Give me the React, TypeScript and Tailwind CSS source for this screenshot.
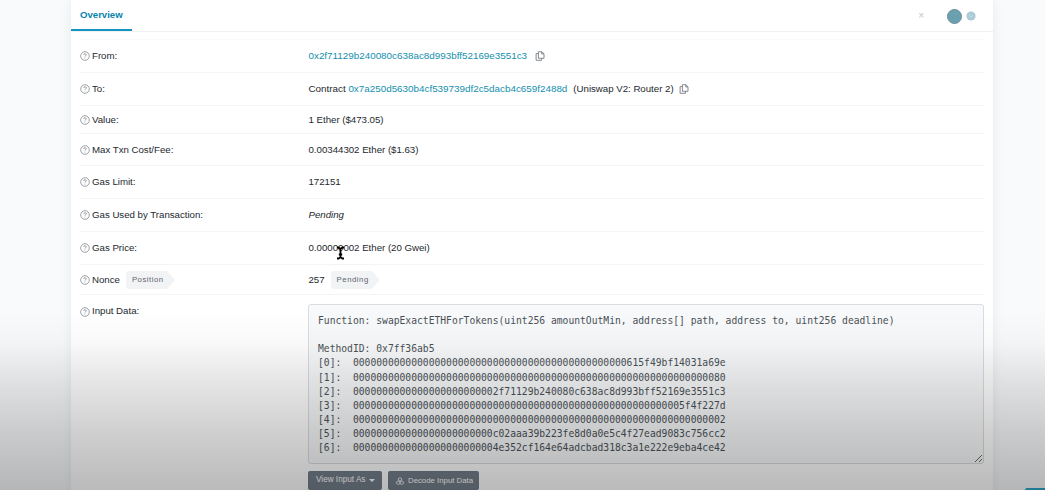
import type { ReactNode } from "react";

interface RowProps {
    label: string;
    height: string;
    tag?: string;
    children: ReactNode;
}

const inputWords = [
    "615f49bf14031a69e",
    "80",
    "2f71129b240080c638ac8d993bff52169e3551c3",
    "5f4f227d",
    "2",
    "c02aaa39b223fe8d0a0e5c4f27ead9083c756cc2",
    "4e352cf164e64adcbad318c3a1e222e9eba4ce42",
];

const inputData = [
    "Function: swapExactETHForTokens(uint256 amountOutMin, address[] path, address to, uint256 deadline)",
    "",
    "MethodID: 0x7ff36ab5",
    ...inputWords.map((word, i) => `[${i}]:  ${word.padStart(64, "0")}`),
].join("\n");

function HelpIcon() {
    return (
        <svg className="mr-[2px] size-[10px] shrink-0" viewBox="0 0 10 10" fill="none" stroke="#858a90" strokeWidth="0.8">
            <circle cx="5" cy="5" r="4.3" />
            <path d="M3.7 4c0-.8.6-1.3 1.3-1.3s1.3.4 1.3 1.1c0 .9-1.3 1-1.3 1.9M5 6.7v.8" />
        </svg>
    );
}

function CopyIcon() {
    return (
        <svg className="size-[10px] shrink-0" viewBox="0 0 10 10" fill="none" stroke="#777d83" strokeWidth="0.9" strokeLinejoin="round">
            <path d="M3.4.7h3.4L9 2.8v4.5H3.4zM6.7.9v2H9" />
            <path d="M3.2 2.6H1.1v6.7h5.4V7.5" />
        </svg>
    );
}

function Tag({ children }: { children: ReactNode }) {
    return (
        <span className="flex h-[18px] w-[49px] items-center rounded-[3px] bg-[#f1f3f5] pl-[6px] text-[7.8px] tracking-[0.5px] text-[#5d6771] [clip-path:polygon(0_0,84%_0,100%_50%,84%_100%,0_100%)]">
            {children}
        </span>
    );
}

function Row({ label, height, tag, children }: RowProps) {
    return (
        <div className={`flex items-center border-b border-[#f3f4f5] pt-px ${height}`}>
            <div className="flex w-[228.5px] shrink-0 items-center">
                <HelpIcon />
                <span>{label}</span>
                {tag && <span className="ml-[6px]"><Tag>{tag}</Tag></span>}
            </div>
            <div className="flex items-center whitespace-pre">{children}</div>
        </div>
    );
}

export default function App() {
    return (
        <div className="relative h-[490px] w-[1045px] overflow-hidden bg-[#f8fafb] font-['Liberation_Sans',Arial,sans-serif] text-[9.7px] tracking-[-0.02px] text-[#24292e]">
            <div className="mx-auto ml-[71px] h-full w-[922px] bg-white shadow-[0_0_10px_rgba(90,110,120,0.1)]">
                {/* Tabs */}
                <div className="flex h-[32px] items-start justify-between border-b border-[#eef0f2]">
                    <div className="h-[31px] w-[61px] border-b-2 border-[#1695c5] pl-[9px] pt-[9px] text-[9.6px] leading-[12px] font-bold tracking-normal text-[#0784ad]">
                        Overview
                    </div>
                    <div className="flex h-[32px] items-center pr-[17px]">
                        <span className="mr-[23px] text-[10px] leading-none text-[#c2c5c8]">×</span>
                        <span className="size-[15px] rounded-full border border-[#718d9b] bg-[#6ba0b1]" />
                        <svg className="ml-[4px] size-[10px]" viewBox="0 0 10 10">
                            <circle cx="5" cy="5" r="4.6" fill="#adcad8" />
                            <path d="M3 4l2 2 2-2" fill="none" stroke="#c4d9e3" />
                        </svg>
                    </div>
                </div>

                {/* Transaction details */}
                <div className="px-[9px]">
                    <div className="h-[8px] border-b border-[#fafafa]" />
                    <Row label="From:" height="h-[33px]">
                        <span className="text-[9.85px] tracking-normal text-[#148fae]">0x2f71129b240080c638ac8d993bff52169e3551c3</span>
                        <span className="ml-[8px]"><CopyIcon /></span>
                    </Row>
                    <Row label="To:" height="h-[33px]">
                        <span className="text-[9.9px]">Contract </span>
                        <span className="text-[9.85px] tracking-normal text-[#148fae]">0x7a250d5630b4cf539739df2c5dacb4c659f2488d</span>
                        <span className="ml-[6px]">(Uniswap V2: Router 2)</span>
                        <span className="ml-[5px]"><CopyIcon /></span>
                    </Row>
                    <Row label="Value:" height="h-[28px]">1 Ether ($473.05)</Row>
                    <Row label="Max Txn Cost/Fee:" height="h-[32px]">0.00344302 Ether ($1.63)</Row>
                    <Row label="Gas Limit:" height="h-[33px]">172151</Row>
                    <Row label="Gas Used by Transaction:" height="h-[33px]"><i>Pending</i></Row>
                    <Row label="Gas Price:" height="h-[33px]">0.00000002 Ether (20 Gwei)</Row>
                    <Row label="Nonce" height="h-[30px]" tag="Position">
                        <span className="mr-[6px]">257</span>
                        <Tag>Pending</Tag>
                    </Row>
                    <div className="flex pt-[9px]">
                        <div className="flex h-[15px] w-[228px] shrink-0 items-center">
                            <HelpIcon />
                            <span>Input Data:</span>
                        </div>
                        <div className="flex-1">
                            <textarea
                                readOnly
                                value={inputData}
                                className="block h-[160px] w-full resize overflow-hidden rounded-[3px] border border-[#d9dce0] bg-[#f8f9fa] px-[9px] pt-[9px] font-['DejaVu_Sans_Mono',monospace] text-[9.68px] leading-[14.13px] tracking-normal whitespace-pre text-[#4a5158] outline-none"
                            />
                            <div className="mt-[7px] flex gap-[6px] text-[8.2px] tracking-normal whitespace-nowrap text-white">
                                <button className="flex h-[19px] w-[74px] items-center rounded-[2px] bg-[#727d89] pl-[8px]">
                                    <span className="w-[47px] text-left">View Input As</span>
                                    <svg className="ml-[6px] h-[3px] w-[6px]" viewBox="0 0 6 3" fill="currentColor"><path d="M0 0h6L3 3z" /></svg>
                                </button>
                                <button className="flex h-[19px] w-[91px] items-center rounded-[2px] bg-[#727d89] pl-[8px]">
                                    <svg className="mr-[4px] size-[8px] shrink-0" viewBox="0 0 8 8" fill="none" stroke="currentColor" strokeWidth="0.8" strokeLinejoin="round">
                                        <path d="M4 .7l1.6.8v1.8L4 4.1l-1.6-.8V1.5zM2.2 4l1.7.8v1.8l-1.7.8-1.6-.8V4.8zM5.8 4l1.6.8v1.8l-1.6.8-1.7-.8V4.8z" />
                                    </svg>
                                    <span className="text-[7.8px]">Decode Input Data</span>
                                </button>
                            </div>
                        </div>
                    </div>
                </div>
            </div>

            <div className="absolute right-0 bottom-0 h-[2px] w-[20px] rounded-tl-[2px] bg-[#2aa5cb]" />

            {/* Bottom shade */}
            <div className="pointer-events-none absolute inset-x-0 bottom-0 h-[180px] bg-[linear-gradient(to_bottom,transparent_0%,rgba(0,0,0,0.025)_18%,rgba(0,0,0,0.1)_40%,rgba(0,0,0,0.19)_68%,rgba(0,0,0,0.27)_100%)]" />

            {/* Text cursor */}
            <svg className="absolute top-[246px] left-[336px] h-[14px] w-[9px]" viewBox="0 0 9 14" fill="none" stroke="#000" strokeWidth="1.8">
                <path d="M1 1.5h1.5L4.5 3l2-1.5H8M4.5 3v8.5M1 12.5h1.5l2-1.3 2 1.3H8M2.8 8.5h3.4" />
            </svg>
        </div>
    );
}
